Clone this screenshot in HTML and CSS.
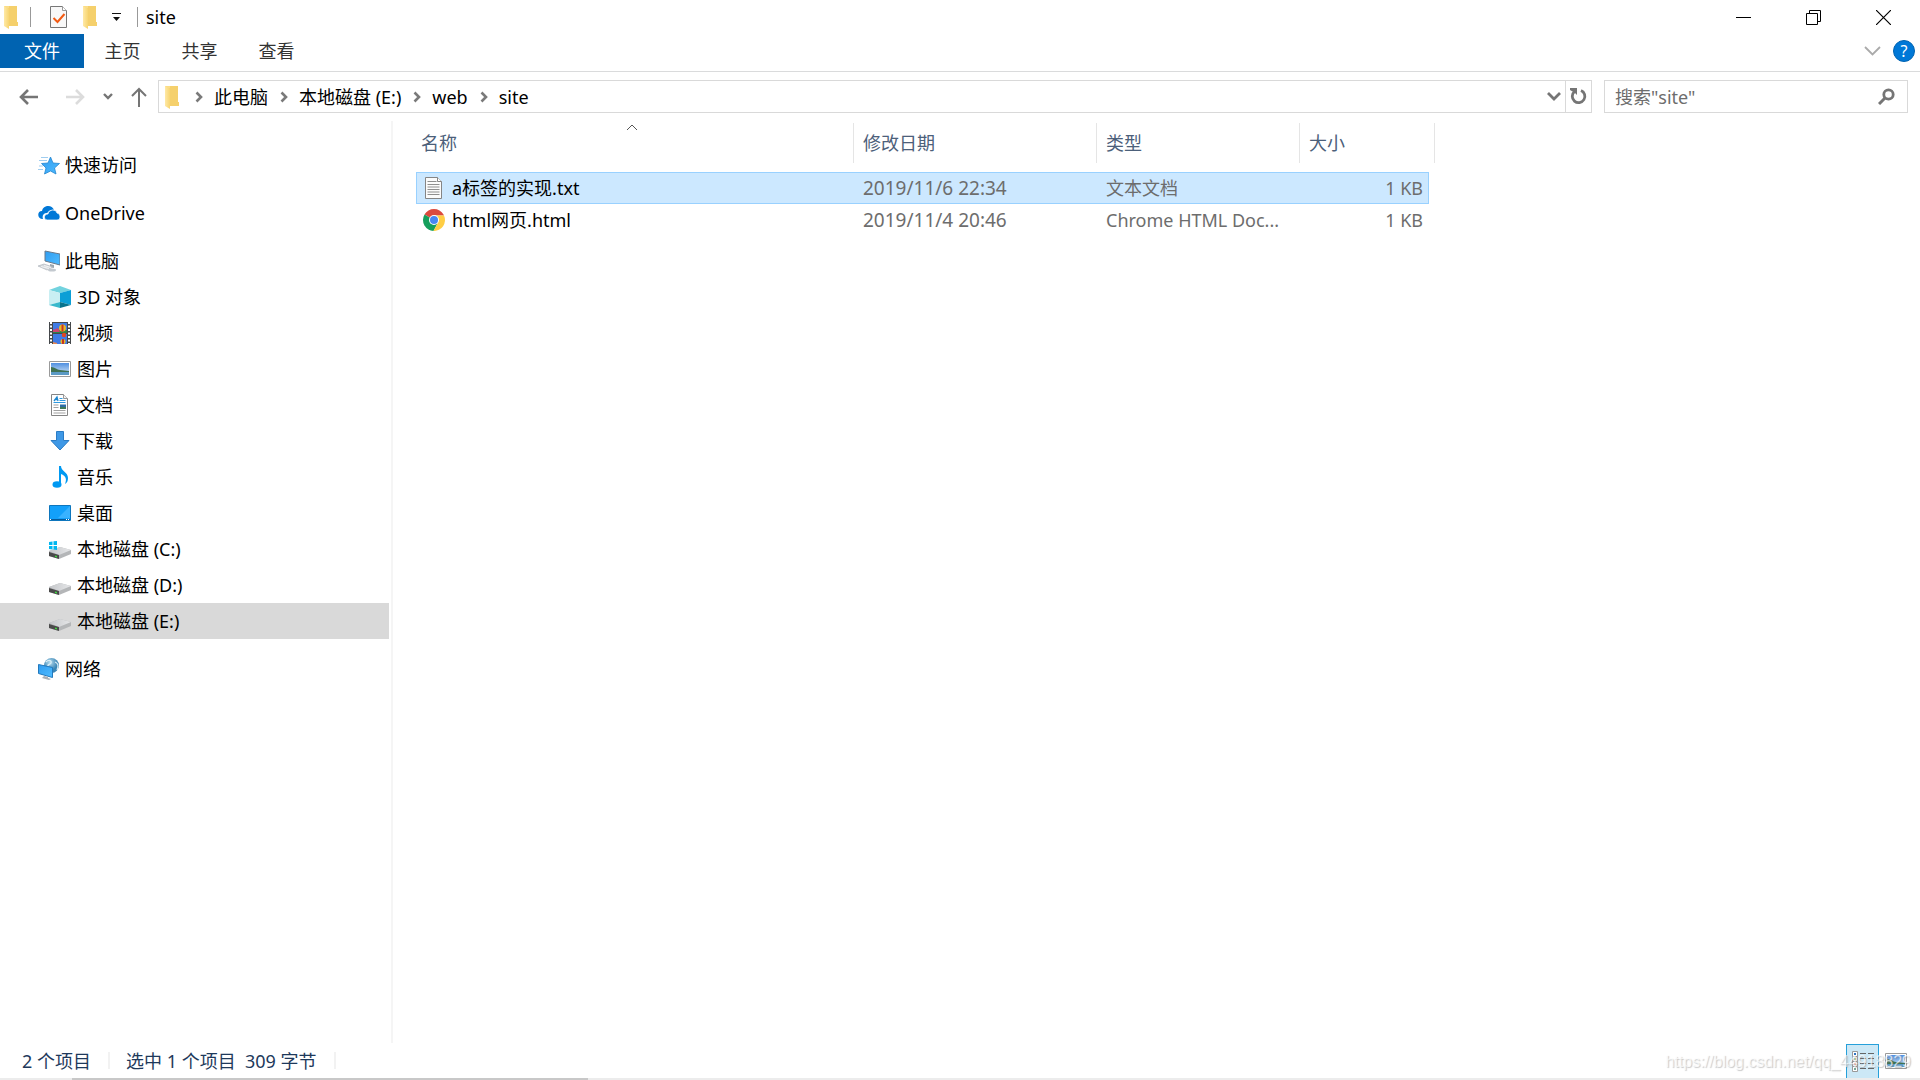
FILE: index.html
```
<!DOCTYPE html>
<html lang="zh-CN">
<head>
    <meta charset="UTF-8">
    <meta name="viewport" content="width=device-width, initial-scale=1.0">
    <title>site</title>
    <link rel="stylesheet" href="styles.css">
</head>
<body>
    <!-- shared icons -->
    <svg class="defs" width="0" height="0">
        <defs>
            <linearGradient id="gFolder"><stop offset="0" stop-color="#ffe9a6"/><stop offset="1" stop-color="#f7d572"/></linearGradient>
            <linearGradient id="gBlue" x2="1" y2="1"><stop offset="0" stop-color="#2f9cf0"/><stop offset="1" stop-color="#4fbcff"/></linearGradient>
            <linearGradient id="gDrive" x2="1"><stop offset="0" stop-color="#c4c6c9"/><stop offset="1" stop-color="#e6e7e9"/></linearGradient>
            <linearGradient id="gSky" x2="0" y2="1"><stop offset="0" stop-color="#4f8fe0"/><stop offset="1" stop-color="#dcecf9"/></linearGradient>
            <radialGradient id="gGlobe" cx="0.4" cy="0.3"><stop offset="0" stop-color="#b5dcef"/><stop offset="1" stop-color="#3c86b5"/></radialGradient>
            <symbol id="folder" viewBox="0 0 14 24">
                <path d="M4 1h9v16h1v4H4z" fill="#f5d06c"/>
                <path d="M0 1h3l2 3v20l-5-3z" fill="url(#gFolder)"/>
                <path d="M0 1h5v2H3z" fill="#fbdd86"/>
            </symbol>
            <symbol id="crumb" viewBox="0 0 8 12">
                <path d="M1.5 1.5L6 6l-4.5 4.5" fill="none" stroke="#7a7a7a" stroke-width="2.6"/>
            </symbol>
            <symbol id="drive" viewBox="0 0 22 14">
                <path d="M0 5L11 1l11 3v4l-12 5L0 10z" fill="#b4b6b8"/>
                <path d="M0 5L11 1l11 3-12 5z" fill="url(#gDrive)"/>
                <path d="M0 6l10 3v4L0 10z" fill="#4a4a4a"/>
                <path d="M6 9.5l2 .6v1.5l-2-.6z" fill="#3fd83f"/>
            </symbol>
            <symbol id="picture" viewBox="0 0 22 16">
                <path d="M.5.5h21v15H.5z" fill="#fff" stroke="#9a9a9a"/>
                <path d="M2 2h18v12H2z" fill="url(#gSky)"/>
                <path d="M2 6c4 0 6 3 9 3l9 1v1H2z" fill="#3f7253"/>
                <path d="M2 11h18v3H2z" fill="#5b9ac5"/>
            </symbol>
        </defs>
    </svg>

    <div class="window">
        <header class="titlebar">
            <svg class="folder" viewBox="0 0 14 24"><use href="#folder"/></svg>
            <span class="divider"></span>
            <button class="quick" aria-label="属性">
                <svg width="18" height="22" viewBox="0 0 18 22">
                    <path d="M.5.5h12l4 4v17H.5z" fill="#f8f8f8" stroke="#777"/>
                    <path d="M12.5.5v4h4" fill="#fff" stroke="#999"/>
                    <path d="M3.5 12l4 4 7-8" fill="none" stroke="#f25a13" stroke-width="2"/>
                </svg>
            </button>
            <button class="quick" aria-label="新建文件夹"><svg class="folder" viewBox="0 0 14 24"><use href="#folder"/></svg></button>
            <button class="quick" aria-label="自定义快速访问工具栏">
                <svg width="9" height="8" viewBox="0 0 9 8"><path d="M0 0h9v1H0zM1 4h7L4.5 8z" fill="#111"/></svg>
            </button>
            <span class="divider"></span>
            <h1>site</h1>
            <div class="window-buttons">
                <button aria-label="最小化"><svg width="15" height="15"><path d="M0 7.5h15" stroke="#000"/></svg></button>
                <button aria-label="还原"><svg width="15" height="15"><path d="M.5 3.5h11v11H.5zM3.5 3.5v-3h11v11h-3" fill="none" stroke="#000"/></svg></button>
                <button aria-label="关闭"><svg width="15" height="15"><path d="M0 0l15 15M15 0L0 15" stroke="#000" stroke-width="1.2"/></svg></button>
            </div>
        </header>

        <nav class="ribbon">
            <button class="tab file">文件</button>
            <button class="tab">主页</button>
            <button class="tab">共享</button>
            <button class="tab">查看</button>
            <div class="ribbon-tools">
                <button aria-label="展开功能区"><svg width="17" height="10"><path d="M1 1l7.5 7.5L16 1" fill="none" stroke="#aaa" stroke-width="1.8"/></svg></button>
                <button class="help" aria-label="帮助">?</button>
            </div>
        </nav>

        <div class="navbar">
            <div class="history">
                <button aria-label="后退"><svg width="20" height="16"><path d="M19 8H2M9 1L2 8l7 7" fill="none" stroke="#757575" stroke-width="2.6"/></svg></button>
                <button aria-label="前进"><svg width="20" height="16"><path d="M1 8h17M11 1l7 7-7 7" fill="none" stroke="#dcdcdc" stroke-width="2.6"/></svg></button>
                <button aria-label="最近浏览的位置"><svg width="10" height="7"><path d="M1 1l4 4 4-4" fill="none" stroke="#757575" stroke-width="2.4"/></svg></button>
                <button aria-label="上移"><svg width="16" height="20"><path d="M8 20V2M1 9l7-7 7 7" fill="none" stroke="#757575" stroke-width="2"/></svg></button>
            </div>
            <div class="address">
                <svg class="folder" viewBox="0 0 14 24"><use href="#folder"/></svg>
                <svg class="crumb"><use href="#crumb"/></svg>
                <a href="#">此电脑</a>
                <svg class="crumb"><use href="#crumb"/></svg>
                <a href="#">本地磁盘 (E:)</a>
                <svg class="crumb"><use href="#crumb"/></svg>
                <a href="#">web</a>
                <svg class="crumb"><use href="#crumb"/></svg>
                <a href="#">site</a>
                <button class="drop" aria-label="以前的位置"><svg width="14" height="9"><path d="M1 1l6 6 6-6" fill="none" stroke="#757575" stroke-width="2.8"/></svg></button>
                <button class="refresh" aria-label="刷新">
                    <svg width="17" height="17"><path d="M11 2.5A6.3 6.3 0 1 1 4.5 3.5" fill="none" stroke="#757575" stroke-width="2.8"/><path d="M0 0h7v7L5 5 0 2z" fill="#757575"/></svg>
                </button>
            </div>
            <form class="search">
                <input type="text" placeholder='搜索"site"' aria-label="搜索">
                <button type="button" aria-label="搜索"><svg width="17" height="17"><circle cx="10.5" cy="6.5" r="4.7" fill="none" stroke="#757575" stroke-width="2.8"/><path d="M7 10l-6 6" stroke="#757575" stroke-width="3"/></svg></button>
            </form>
        </div>

        <main class="content">
            <aside class="sidebar">
                <ul>
                    <li><a href="#">
                        <svg class="icon" viewBox="0 0 22 22">
                            <path d="M12.5 3l2.5 6 6.5.5-5 4.5 1.5 6-5.500-3-6 3L8 14 3.500 9.500 10 9z" fill="url(#gBlue)" stroke="#2385cf" stroke-width=".8"/>
                            <path d="M3 3.5h7M1 6.5h8M1 12h4M0 15.5h5" stroke="#9fcdf0"/>
                        </svg>快速访问</a></li>
                </ul>
                <ul>
                    <li><a href="#">
                        <svg class="icon" viewBox="0 0 22 22">
                            <path d="M5 17H4c-5-1-5-8 0-8 1-6 10-7 12-1-5-1-6 3-7 3-4 0-5 3-4 6z" fill="#0078d7"/>
                            <path d="M9 18c-4-1-3-6 1-6 1-5 8-5 9-1 4 1 4 7 0 7z" fill="#0078d7" stroke="#fff" stroke-width=".7"/>
                        </svg>OneDrive</a></li>
                </ul>
                <ul>
                    <li><a href="#">
                        <svg class="icon" viewBox="0 0 22 22">
                            <path d="M7 1l15 3v11L7 11z" fill="url(#gBlue)" stroke="#69798a"/>
                            <path d="M12 14l4 1v3l-4-1z" fill="#9aa5ae"/>
                            <path d="M0 16l6-2 9 3-6 3z" fill="#d3d7db" stroke="#a9b0b7" stroke-width=".6"/>
                            <path d="M3 16.5l8 2M6 15.5l7 2" stroke="#fff" stroke-width=".7"/>
                            <ellipse cx="14" cy="20" rx="4" ry="1.5" fill="#c3c9cf"/>
                        </svg>此电脑</a></li>
                    <li class="child"><a href="#">
                        <svg class="icon" viewBox="0 0 22 22">
                            <path d="M0 4L11 0l11 4-11 3z" fill="#72d3df"/>
                            <path d="M0 4l11 3v9L0 19z" fill="#c9eff3"/>
                            <path d="M22 4L11 7v9l11 3z" fill="#0c9fd6"/>
                            <path d="M0 19l11-3v6z" fill="#3ab9cc"/><path d="M11 16l11 3-11 3z" fill="#08738c"/>
                        </svg>3D 对象</a></li>
                    <li class="child"><a href="#">
                        <svg class="icon" viewBox="0 0 22 22">
                            <path d="M0 0h22v22H0z" fill="#45484b"/>
                            <path d="M4 1h14v10H4z" fill="#3f7be5"/><path d="M4 12h14v10H4z" fill="#3f7be5"/>
                            <path d="M4 8h14v3H4z" fill="#2d8249"/><path d="M4 8l5-2 2 4H4z" fill="#cb4572"/>
                            <path d="M2 0v22M20 0v22" stroke="#fff" stroke-width="2" stroke-dasharray="2 1.5"/>
                            <circle cx="13.5" cy="6" r="3.5" fill="#e7b928"/><path d="M12.5 2.5h2v7h-2z" fill="#c93622"/>
                            <circle cx="15" cy="13" r="2.2" fill="#e14924"/><circle cx="14" cy="19.5" r="2.5" fill="#e7b928"/>
                            <path d="M13 17h2v5h-2z" fill="#c93622"/><path d="M4 22v-2l4 1v1z" fill="#e98a55"/>
                        </svg>视频</a></li>
                    <li class="child"><a href="#"><svg class="icon" viewBox="0 0 22 16"><use href="#picture"/></svg>图片</a></li>
                    <li class="child"><a href="#">
                        <svg class="icon" viewBox="0 0 22 22">
                            <path d="M2.5.5h12l4 4v17h-16z" fill="#fff" stroke="#858585"/><path d="M14.5.5v4h4" fill="#f3f3f3" stroke="#999"/>
                            <path d="M5 7l3-4 1 4M6 5.5h3" fill="none" stroke="#1d87cf" stroke-width="1.3"/>
                            <path d="M10.5 4.5h3M10.5 6.5h6M4.5 8.5h12" stroke="#2e9ae0" stroke-width="1.2"/>
                            <path d="M11 10.5h6v4h-6z" fill="#2d6ca5"/><path d="M11 13h6v2h-6z" fill="#3f7b58"/>
                            <path d="M4.5 11h5M4.5 13.5h5M4.5 16.5h12M4.5 19h12" stroke="#a1a1a1"/>
                        </svg>文档</a></li>
                    <li class="child"><a href="#">
                        <svg class="icon" viewBox="0 0 22 22"><path d="M7.5 1.5h7v9H20L11 20l-9-9.5h5.5z" fill="#3e98e6" stroke="#2b7cc5"/></svg>下载</a></li>
                    <li class="child"><a href="#">
                        <svg class="icon" viewBox="0 0 22 22">
                            <ellipse cx="8" cy="18.5" rx="4.5" ry="3.2" fill="#0099f2"/>
                            <path d="M10 0h2c0 5 7 6 7 12 0 3-1 5-3 6 2-5 1-8-4-10v11h-2z" fill="#0099f2"/>
                        </svg>音乐</a></li>
                    <li class="child"><a href="#">
                        <svg class="icon" viewBox="0 0 22 22"><path d="M.5 3.5h21v15H.5z" fill="#13a0fa" stroke="#0e76bd"/><path d="M21 4v12H9z" fill="#39b2ff"/><path d="M1 17.5h20" stroke="#075b9b"/><path d="M1 17.5h2M17 17.5h3" stroke="#fff" stroke-dasharray="1 1"/></svg>桌面</a></li>
                    <li class="child"><a href="#">
                        <svg class="icon" viewBox="0 0 22 22"><use href="#drive" y="8" width="22" height="14"/><path d="M0 4l3.5-.5V7H0zM4.5 3.3L8 3v4H4.5zM0 8h3.5v3.5L0 11zM4.5 8H8v4l-3.5-.5z" fill="#00b7f0"/></svg>本地磁盘 (C:)</a></li>
                    <li class="child"><a href="#"><svg class="icon" viewBox="0 0 22 22"><use href="#drive" y="8" width="22" height="14"/></svg>本地磁盘 (D:)</a></li>
                    <li class="child current"><a href="#"><svg class="icon" viewBox="0 0 22 22"><use href="#drive" y="8" width="22" height="14"/></svg>本地磁盘 (E:)</a></li>
                </ul>
                <ul>
                    <li><a href="#">
                        <svg class="icon" viewBox="0 0 22 22">
                            <circle cx="13.5" cy="7.5" r="7.5" fill="url(#gGlobe)"/><path d="M8 4c3-3 6-1 5 1s-4 1-3 4M17 4c3 1 4 4 2 8" fill="none" stroke="#d9edf5" stroke-width="1.3"/>
                            <path d="M.5 6.5l14 3v10l-14-4z" fill="url(#gBlue)" stroke="#2279bd"/>
                            <path d="M6 18l4 1v1l3 1-2 1-7-2z" fill="#a9afb5"/>
                        </svg>网络</a></li>
                </ul>
            </aside>

            <section class="files">
                <table>
                    <thead>
                        <tr>
                            <th class="name">名称<svg class="sort" width="12" height="7"><path d="M1 6l5-5 5 5" fill="none" stroke="#555"/></svg></th>
                            <th class="date">修改日期</th>
                            <th class="type">类型</th>
                            <th class="size">大小</th>
                        </tr>
                    </thead>
                    <tbody>
                        <tr class="selected">
                            <td class="file-name"><div>
                                <svg class="icon" viewBox="0 0 22 22"><path d="M2.5.5h12l4 4v17h-16z" fill="#fbfbfb" stroke="#858585"/><path d="M14.5.5v4h4" fill="#fff" stroke="#858585"/><path d="M4.5 4.5h9M4.5 7.5h12M4.5 10h12M4.5 12.5h12M4.5 15h12M4.5 17.5h12" stroke="#8f8f8f"/></svg>a标签的实现.txt</div></td>
                            <td class="modified">2019/11/6 22:34</td>
                            <td>文本文档</td>
                            <td class="amount">1 KB</td>
                        </tr>
                        <tr>
                            <td class="file-name"><div>
                                <svg class="icon" viewBox="0 0 22 22">
                                    <path d="M11 11L1.5 5.5A11 11 0 0 1 20.5 5.5L21 6.5H11z" fill="#db4a3e"/>
                                    <path d="M11 11L1.5 5.5A11 11 0 0 0 10.5 22L15 13.5z" fill="#159f5c"/>
                                    <path d="M11 6.5h10A11 11 0 0 1 10.5 22L15 13.5z" fill="#ffce44"/>
                                    <circle cx="11" cy="11" r="5" fill="#fff"/><circle cx="11" cy="11" r="4" fill="#4787f3"/>
                                </svg>html网页.html</div></td>
                            <td class="modified">2019/11/4 20:46</td>
                            <td>Chrome HTML Doc...</td>
                            <td class="amount">1 KB</td>
                        </tr>
                    </tbody>
                </table>
            </section>
        </main>

        <footer class="statusbar">
            <span class="status">2 个项目</span>
            <span class="status">选中 1 个项目&nbsp; 309 字节</span>
            <div class="views">
                <button class="active" aria-label="详细信息">
                    <svg width="22" height="22">
                        <path d="M.5.5h5v5h-5zM.5 5.5h5v5h-5zM.5 10.5h5v5h-5zM.5 15.5h5v5h-5z" fill="#fff" stroke="#999"/>
                        <path d="M2 2h2v2H2z" fill="#2d76c4"/><path d="M2 7h2v2H2z" fill="#5f9b46"/><path d="M2 12h2v2H2z" fill="#c03a2c"/><path d="M2 17h2v2H2z" fill="#7a9"/>
                        <path d="M8 2.5h14M8 7.5h14M8 12.5h14M8 17.5h14" stroke="#666" stroke-dasharray="6 2"/>
                    </svg>
                </button>
                <button aria-label="大缩略图"><svg width="22" height="16"><use href="#picture"/></svg></button>
            </div>
            <span class="watermark">https://blog.csdn.net/qq_44918829</span>
        </footer>
        <div class="edge"><span></span></div>
    </div>
</body>
</html>
```
FILE: styles.css
```
* {
    box-sizing: border-box;
}
body {
    margin: 0;
    font-family: "Noto Sans", "Noto Sans CJK SC", sans-serif;
    font-size: 18px;
    line-height: 24px;
    color: #000;
    background: #fff;
}
button, input {
    font: inherit;
    color: inherit;
    border: none;
    background: none;
    padding: 0;
}
a {
    color: inherit;
    text-decoration: none;
}
svg {
    display: block;
    flex: none;
}
.defs {
    position: absolute;
}
.window {
    display: flex;
    flex-direction: column;
    min-height: 100vh;
}
.folder {
    width: 14px;
    height: 24px;
}
.icon {
    width: 22px;
    height: 22px;
}

/* title bar */
.titlebar {
    display: flex;
    align-items: center;
    height: 34px;
    padding-left: 4px;
}
.titlebar .divider {
    width: 1px;
    height: 20px;
    margin: 0 8px 0 12px;
    background: #999;
}
.quick {
    margin-left: 11px;
    margin-right: 4px;
}
.titlebar .quick + .divider {
    margin-left: 12px;
    margin-right: 8px;
}
h1 {
    margin: 0;
    font-size: 18px;
    font-weight: normal;
}
.window-buttons {
    display: flex;
    margin-left: auto;
    padding-right: 2px;
}
.window-buttons button {
    display: flex;
    align-items: center;
    justify-content: center;
    width: 70px;
    height: 34px;
}

/* ribbon tabs */
.ribbon {
    display: flex;
    height: 38px;
    padding-bottom: 3px;
    border-bottom: 1px solid #dadbdc;
}
.tab {
    width: 77px;
    color: #333;
}
.tab.file {
    width: 84px;
    color: #fff;
    background: #0063b1;
}
.ribbon-tools {
    display: flex;
    align-items: center;
    gap: 12px;
    margin-left: auto;
    padding-right: 5px;
}
.help {
    width: 22px;
    height: 22px;
    font-size: 16px;
    line-height: 20px;
    color: #fff;
    background: #0078d7;
    border: 1px solid #0063b1;
    border-radius: 50%;
}

/* address bar */
.navbar {
    display: flex;
    align-items: center;
    padding: 8px 12px 8px 19px;
}
.history {
    display: flex;
    align-items: center;
    margin-right: 11px;
}
.history button {
    margin-right: 18px;
}
.history button:first-child {
    margin-right: 26px;
}
.history button:last-child {
    margin-right: 0;
}
.address, .search {
    display: flex;
    align-items: center;
    height: 33px;
    border: 1px solid #d9d9d9;
}
.address {
    flex: 1;
    padding-left: 6px;
    margin-right: 12px;
}
.crumb {
    width: 8px;
    height: 12px;
    margin: 0 11px 0 12px;
}
.folder + .crumb {
    margin-left: 16px;
}
.drop {
    margin-left: auto;
    margin-right: 4px;
}
.refresh {
    display: flex;
    align-items: center;
    justify-content: center;
    width: 26px;
    height: 31px;
    border-left: 1px solid #d9d9d9;
}
.search {
    width: 304px;
    padding: 0 12px 0 10px;
}
.search input {
    flex: 1;
    min-width: 0;
    outline: none;
}
.search input::placeholder {
    color: #6d6d6d;
}

/* folder tree */
.content {
    flex: 1;
    display: flex;
}
.sidebar {
    width: 393px;
    padding-top: 26px;
    padding-right: 2px;
    border-right: 2px solid #f5f5f5;
}
.sidebar ul {
    list-style: none;
    margin: 0 0 12px;
    padding: 0;
}
.sidebar a {
    display: flex;
    align-items: center;
    gap: 5px;
    height: 36px;
    padding-left: 38px;
}
.sidebar .child a {
    gap: 6px;
    padding-left: 49px;
}
.sidebar .current {
    background: #d9d9d9;
}

/* file list */
.files {
    padding: 2px 0 0 23px;
}
table {
    border-collapse: separate;
    border-spacing: 0;
    table-layout: fixed;
    width: 1013px;
}
th {
    position: relative;
    height: 40px;
    padding: 0 0 0 9px;
    font-weight: normal;
    text-align: left;
    color: #4c607a;
}
th::after {
    content: "";
    position: absolute;
    top: 0;
    right: 0;
    width: 1px;
    height: 100%;
    background: #e5e5e5;
}
.name {
    width: 438px;
    padding-left: 5px;
}
.date {
    width: 243px;
}
.type {
    width: 203px;
}
.size::after {
    right: -6px;
}
.sort {
    position: absolute;
    top: 1px;
    left: 210px;
}
tbody::before {
    content: "";
    display: block;
    height: 9px;
}
td {
    height: 32px;
    padding: 0 0 0 9px;
    color: #6d6d6d;
    white-space: nowrap;
    border: solid transparent;
    border-width: 1px 0;
}
td.file-name {
    padding-left: 7px;
    color: #000;
}
.file-name div {
    display: flex;
    align-items: center;
    gap: 7px;
}
.modified {
    font-size: 19px;
}
.amount {
    padding-right: 6px;
    text-align: right;
}
.selected td {
    background: #cce8ff;
    border-color: #99d1ff;
}
.selected td:first-child {
    box-shadow: inset 1px 0 #99d1ff;
}
.selected td:last-child {
    box-shadow: inset -1px 0 #99d1ff;
}

/* status bar */
.statusbar {
    position: relative;
    display: flex;
    align-items: center;
    height: 35px;
    padding-left: 22px;
    color: #1e395b;
}
.status {
    display: flex;
    align-items: center;
}
.status::after {
    content: "";
    width: 2px;
    height: 17px;
    margin: 0 16px 0 17px;
    background: #f2f2f2;
}
.views {
    display: flex;
    align-self: stretch;
    margin-left: auto;
    padding: 1px 7px 0 0;
}
.views button {
    display: flex;
    align-items: center;
    justify-content: center;
    width: 34px;
}
.views .active {
    width: 33px;
    background: #cce8f6;
    border: 1px solid #26a0da;
    border-bottom: none;
}
.watermark {
    position: absolute;
    right: 9px;
    bottom: 4px;
    font-family: "Liberation Sans", Arial, sans-serif;
    font-size: 16px;
    color: rgba(255, 255, 255, 0.7);
    text-shadow: 1px 1px 1px rgba(120, 120, 120, 0.4);
    pointer-events: none;
}
.edge {
    display: flex;
    height: 2px;
    padding-left: 72px;
    background: #ececec;
}
.edge span {
    width: 516px;
    background: #c8c8c8;
}
```
